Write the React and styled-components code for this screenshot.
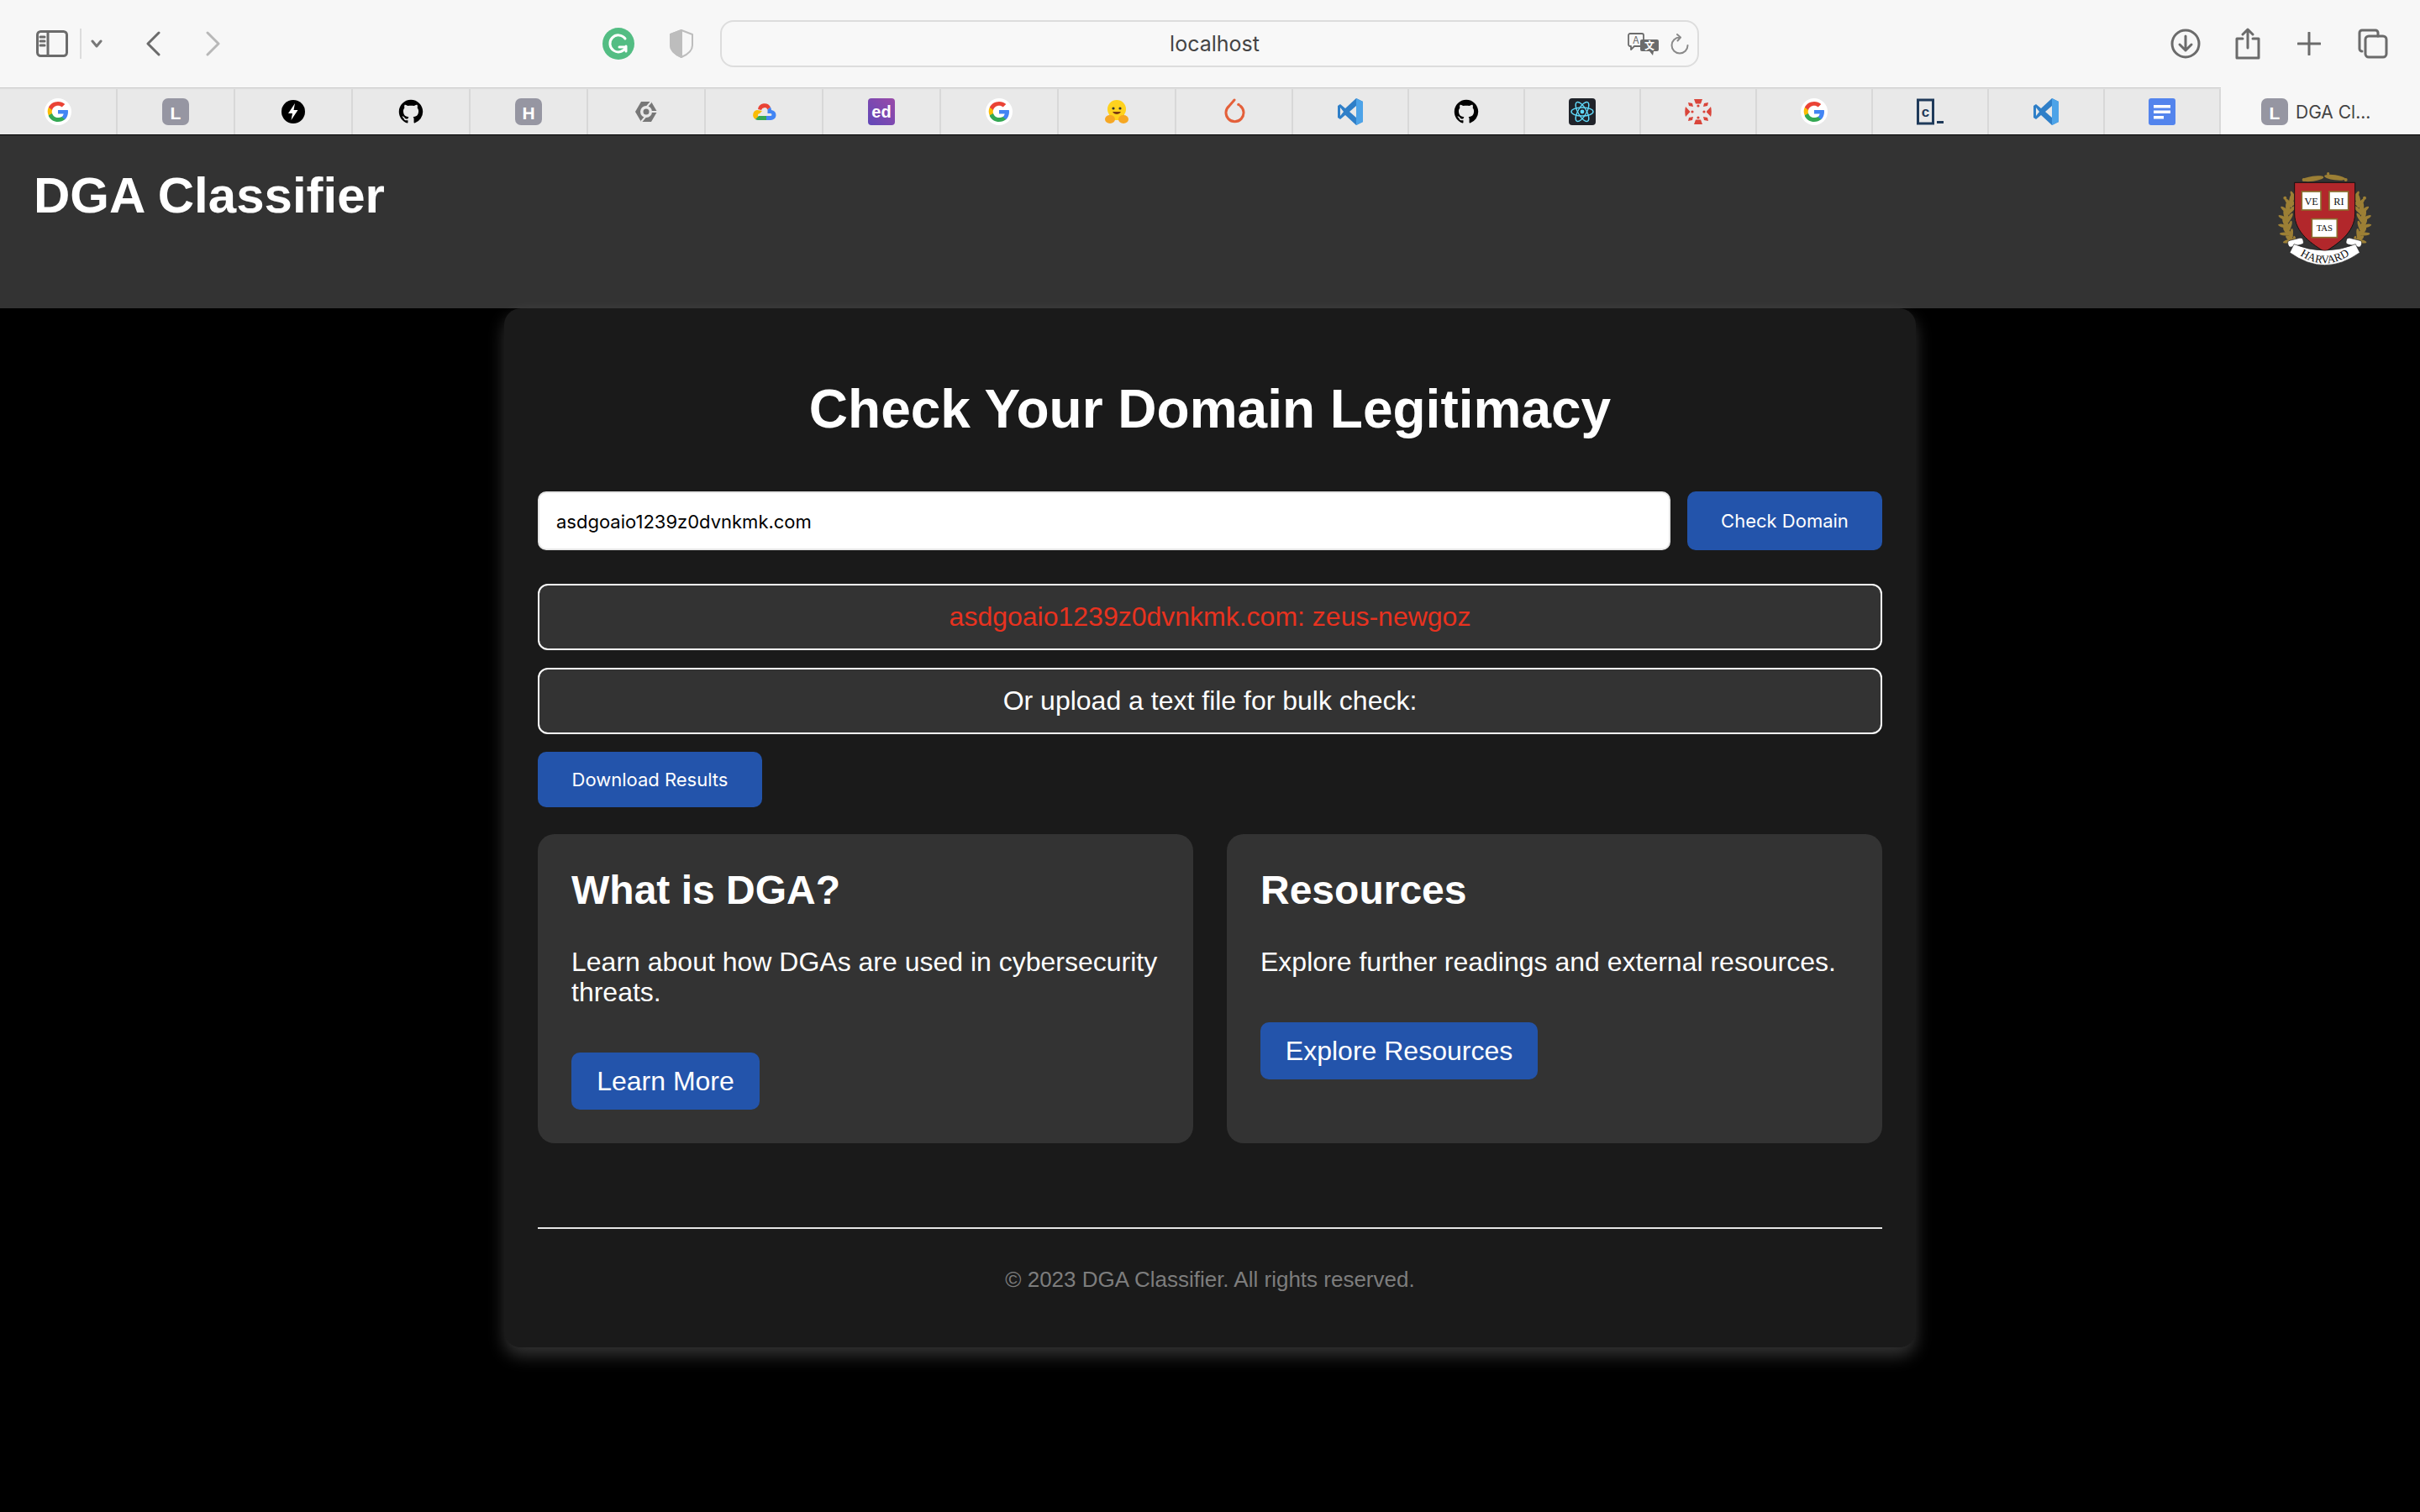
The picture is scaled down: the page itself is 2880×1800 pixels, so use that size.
import React from "react";
import styled, { createGlobalStyle } from "styled-components";

const GlobalStyle = createGlobalStyle`
  html, body { margin: 0; padding: 0; background: #000; }
  body { font-family: "Liberation Sans", Arial, sans-serif; }
  * { box-sizing: border-box; }
`;

const Page = styled.div`
  width: 2880px;
  height: 1800px;
  overflow: hidden;
  background: #000;
  display: flex;
  flex-direction: column;
`;

/* ---- browser chrome ---- */
const Toolbar = styled.div`
  height: 104px;
  background: #f7f7f7;
  display: flex;
  align-items: center;
  padding-left: 43px;
`;
const ToolIcon = styled.svg`
  display: block;
  flex: none;
  margin-left: ${(p) => p.$gap || 0}px;
  fill: none;
  stroke: ${(p) => p.$color || "#6b6b6b"};
  stroke-width: ${(p) => p.$weight || 3};
  stroke-linecap: round;
  stroke-linejoin: round;
`;
const UrlBar = styled.div`
  width: 1165px;
  height: 56px;
  margin-left: 32px;
  border: 2px solid #dddddd;
  border-radius: 16px;
  background: #f8f8f8;
  display: grid;
  grid-template-columns: 1fr auto 1fr;
  align-items: center;
  padding: 0 10px 0 22px;
`;
const UrlText = styled.span`
  grid-column: 2;
  font-family: Inter, "Liberation Sans", sans-serif;
  font-size: 25px;
  color: #444;
`;
const UrlTools = styled.div`
  grid-column: 3;
  justify-self: end;
  display: flex;
  align-items: center;
  gap: 14px;
`;

const TabStrip = styled.div`
  height: 56px;
  padding-top: 2px;
  background: #e9e9e9;
  display: flex;
  box-shadow: inset 0 3px 2px -2px #c4c4c4;
`;
const Tab = styled.div`
  width: ${(p) => p.$width}px;
  flex: none;
  display: flex;
  align-items: center;
  justify-content: center;
  border-right: 2px solid #d8d8d8;
`;
const ActiveTab = styled.div`
  flex: 1;
  margin-top: -2px;
  display: flex;
  align-items: center;
  padding: 2px 0 0 48px;
  gap: 9px;
  background: #f7f7f7;
  font-family: Inter, "Liberation Sans", sans-serif;
  font-size: 21px;
  color: #444;
`;
const Favicon = styled.svg`
  display: block;
  width: 32px;
  height: 32px;
`;
const FaviconText = styled.text`
  font-family: "Liberation Sans", Arial, sans-serif;
  font-weight: 700;
  font-size: ${(p) => p.$size || 20}px;
  fill: ${(p) => p.$fill || "#fff"};
  text-anchor: middle;
`;
const GlyphText = styled.text`
  font-family: "Noto Sans CJK SC", "Liberation Sans", sans-serif;
  font-size: ${(p) => p.$size}px;
  font-weight: ${(p) => p.$weight || 400};
  fill: ${(p) => p.$fill};
  stroke: none;
  text-anchor: middle;
`;

const GoogleIcon = () => (
  <Favicon viewBox="0 0 32 32">
    <circle cx="16" cy="16" r="16" fill="#fff" />
    <g transform="translate(16 16) scale(1.2) translate(-16 -16)">
      <path d="M26 16.300c0-.8-.1-1.400-.2-2H16v3.800h5.600c-.3 1.300-1 2.400-2.100 3.100v2.600h3.400c2-1.800 3.100-4.500 3.100-7.500z" fill="#4285f4" />
      <path d="M16 26c2.800 0 5.100-.9 6.900-2.500l-3.400-2.600c-.9.6-2.100 1-3.500 1-2.700 0-5-1.800-5.800-4.300H6.700v2.700C8.400 23.700 11.900 26 16 26z" fill="#34a853" />
      <path d="M10.200 17.600c-.4-1.100-.4-2.200 0-3.300v-2.700H6.700c-1.300 2.300-1.300 5.400 0 8z" fill="#fbbc05" />
      <path d="M16 10c1.500 0 2.900.5 3.900 1.500l3-3C21.100 6.900 18.700 6 16 6c-4.100 0-7.600 2.300-9.300 5.600l3.500 2.700C11 11.800 13.300 10 16 10z" fill="#ea4335" />
    </g>
  </Favicon>
);
const LetterIcon = ({ letter }) => (
  <Favicon viewBox="0 0 32 32">
    <rect width="32" height="32" rx="7" fill="#9696a2" />
    <FaviconText x="16" y="25" $size={21}>{letter}</FaviconText>
  </Favicon>
);
const BoltIcon = () => (
  <Favicon viewBox="0 0 32 32">
    <circle cx="16" cy="16" r="14" fill="#000" />
    <path d="M18 6l-8 12h5l-1.500 8 8-12h-5z" fill="#fff" />
  </Favicon>
);
const GithubIcon = () => (
  <Favicon viewBox="-1 -1 18 18">
    <path fill="#000" d="M8 0C3.580 0 0 3.580 0 8c0 3.540 2.290 6.530 5.470 7.590.4.070.55-.17.55-.38 0-.19-.01-.82-.01-1.490-2.010.37-2.530-.49-2.690-.94-.09-.23-.48-.94-.82-1.130-.28-.15-.68-.52-.01-.53.63-.01 1.080.58 1.230.82.720 1.210 1.870.87 2.330.66.070-.52.280-.87.510-1.070-1.780-.2-3.640-.89-3.640-3.950 0-.87.310-1.590.820-2.150-.080-.2-.360-1.020.080-2.120 0 0 .670-.210 2.200.820.640-.180 1.320-.270 2-.270s1.360.090 2 .270c1.530-1.040 2.200-.820 2.200-.820.440 1.100.160 1.920.080 2.120.510.560.820 1.270.820 2.150 0 3.070-1.870 3.750-3.650 3.950.290.250.540.730.540 1.480 0 1.070-.010 1.930-.010 2.200 0 .210.150.460.550.380A8.010 8.010 0 0 0 16 8c0-4.420-3.580-8-8-8z" />
  </Favicon>
);
const HexIcon = () => (
  <Favicon viewBox="0 0 32 32">
    <path d="M10 4h12l7 12-7 12H10L3 16z" fill="#777" />
    <circle cx="16" cy="16" r="7" fill="#e9e9e9" />
    <circle cx="16" cy="16" r="3.500" fill="#777" />
    <path d="M22 4l-6 7M29 16h-9M10 28l6-7" stroke="#e9e9e9" strokeWidth="2" />
  </Favicon>
);
const CloudIcon = () => (
  <Favicon viewBox="0 0 32 32">
    <path d="M9 13a8 8 0 0 1 15-2.500l-3.500 3A4 4 0 0 0 13 14z" fill="#ea4335" />
    <path d="M24 10.500A8 8 0 0 1 25 14a6 6 0 0 1-1 12h-5v-5h5a1.500 1.500 0 0 0 0-3h-3.500v-4.500z" fill="#4285f4" />
    <path d="M8 14a6 6 0 0 0-2 11l4-3a2 2 0 0 1 1-3.800L14 15z" fill="#fbbc05" />
    <path d="M6 25c1 .7 2.500 1 4 1h9v-5h-9z" fill="#34a853" />
  </Favicon>
);
const EdIcon = () => (
  <Favicon viewBox="0 0 32 32">
    <defs>
      <linearGradient id="edGrad" x1="1" y1="0" x2="0" y2="1">
        <stop offset="0" stopColor="#9a4aa8" />
        <stop offset="1" stopColor="#6048b8" />
      </linearGradient>
    </defs>
    <rect width="32" height="32" rx="4" fill="url(#edGrad)" />
    <FaviconText x="16" y="23" $size={20}>ed</FaviconText>
  </Favicon>
);
const HuggingIcon = () => (
  <Favicon viewBox="0 0 32 32">
    <circle cx="16" cy="13" r="11" fill="#ffd21e" />
    <rect x="7" y="10" width="18" height="16" fill="#ffd21e" />
    <ellipse cx="8" cy="25" rx="6" ry="5" fill="#f6a723" />
    <ellipse cx="24" cy="25" rx="6" ry="5" fill="#f6a723" />
    <circle cx="12" cy="12" r="1.600" fill="#333" />
    <circle cx="20" cy="12" r="1.600" fill="#333" />
    <path d="M11 16c2 4 8 4 10 0z" fill="#7a3b12" />
  </Favicon>
);
const TorchIcon = () => (
  <Favicon viewBox="0 0 32 32">
    <path d="M16 2l-6 7a10.500 10.500 0 1 0 13 0" fill="none" stroke="#e4603a" strokeWidth="3" strokeLinecap="round" />
    <circle cx="21" cy="7.500" r="1.800" fill="#e4603a" />
  </Favicon>
);
const VscodeIcon = () => (
  <Favicon viewBox="0 0 32 32">
    <path d="M23 0l8 4v24l-8 4-13-12-6 5-3-2v-14l3-2 6 5z" fill="#2f7fc8" />
    <path d="M23 0l8 4v24l-8 4z" fill="#4da3e8" />
    <path d="M23 9l-8 7 8 7z" fill="#e9e9e9" />
    <path d="M4 11l4 5-4 5z" fill="#e9e9e9" />
  </Favicon>
);
const ReactIcon = () => (
  <Favicon viewBox="0 0 32 32">
    <rect width="32" height="32" rx="4" fill="#20232a" />
    <g fill="none" stroke="#61dafb" strokeWidth="1.400">
      <ellipse cx="16" cy="16" rx="13" ry="5" />
      <ellipse cx="16" cy="16" rx="13" ry="5" transform="rotate(60 16 16)" />
      <ellipse cx="16" cy="16" rx="13" ry="5" transform="rotate(120 16 16)" />
    </g>
    <circle cx="16" cy="16" r="2.400" fill="#61dafb" />
  </Favicon>
);
const CanvasIcon = () => (
  <Favicon viewBox="0 0 32 32">
    <g fill="#d9453a">
      <path d="M11 1h10l-2 5.500h-6z" />
      <path d="M11 31h10l-2-5.500h-6z" />
      <path d="M1 10l5 5.500v1L1 22c-1-3.500-1-8.500 0-12z" />
      <path d="M31 10l-5 5.500v1l5 5.500c1-3.500 1-8.500 0-12z" />
      <path d="M4 5l5 1 1 4-5-1z" />
      <path d="M28 5l-5 1-1 4 5-1z" />
      <path d="M4 27l5-1 1-4-5 1z" />
      <path d="M28 27l-5-1-1-4 5 1z" />
      <circle cx="16" cy="9" r="1.600" />
      <circle cx="16" cy="23" r="1.600" />
      <circle cx="9" cy="16" r="1.600" />
      <circle cx="23" cy="16" r="1.600" />
    </g>
  </Favicon>
);
const CodeBoxIcon = () => (
  <Favicon viewBox="0 0 32 32">
    <rect x="1.500" y="2" width="18" height="28" fill="none" stroke="#1f3a5a" strokeWidth="3" />
    <FaviconText x="10.500" y="22" $size={17} $fill="#1f3a5a">c</FaviconText>
    <rect x="24" y="27" width="8" height="3" fill="#1f3a5a" />
  </Favicon>
);
const DocsIcon = () => (
  <Favicon viewBox="0 0 32 32">
    <rect width="32" height="32" rx="3" fill="#5384ed" />
    <rect x="6" y="8" width="20" height="3.500" fill="#fff" />
    <rect x="6" y="14.500" width="20" height="3.500" fill="#fff" />
    <rect x="6" y="21" width="12" height="3.500" fill="#fff" />
  </Favicon>
);

const tabs = [
  [<GoogleIcon />, 140], [<LetterIcon letter="L" />, 140], [<BoltIcon />, 140], [<GithubIcon />, 140],
  [<LetterIcon letter="H" />, 140], [<HexIcon />, 140], [<CloudIcon />, 140], [<EdIcon />, 140],
  [<GoogleIcon />, 140], [<HuggingIcon />, 140], [<TorchIcon />, 139], [<VscodeIcon />, 138],
  [<GithubIcon />, 138], [<ReactIcon />, 138], [<CanvasIcon />, 138], [<GoogleIcon />, 138],
  [<CodeBoxIcon />, 138], [<VscodeIcon />, 138], [<DocsIcon />, 138],
];

/* ---- page header ---- */
const Header = styled.header`
  height: 207px;
  flex: none;
  background: #333333;
  border-top: 1px solid #000;
  padding: 40px 52px 0 40px;
  display: flex;
  justify-content: space-between;
  align-items: flex-start;
`;
const Brand = styled.h1`
  margin: 0;
  font-size: 60px;
  line-height: 64px;
  font-weight: 700;
  color: #fff;
`;
const Crest = styled.svg`
  display: block;
  width: 118px;
  height: 112px;
  margin-top: 3px;
`;
const CrestText = styled.text`
  font-family: "Liberation Serif", "Times New Roman", serif;
  font-size: ${(p) => p.$size}px;
  fill: #111;
  text-anchor: middle;
`;

// leaves of the wreath, one branch per side, in the crest's own coordinates
const wreathNodes = [-42, -30, -18, -6, 6, 18, 30];

const HarvardCrest = () => (
  <Crest viewBox="90 40 354 336">
    <g fill="#9c7f35">
      {wreathNodes.map((deg) => {
        const a = (deg * Math.PI) / 180;
        const x = 138 * Math.cos(a);
        const y = 215 + 138 * Math.sin(a);
        return (
          <g key={deg}>
            {[-1, 1].map((side) => {
              const cx = 260 + side * x;
              return (
                <g key={side}>
                  <ellipse cx={cx} cy={y} rx="8" ry="24" transform={`rotate(${side * (deg + 25)} ${cx} ${y})`} />
                  <ellipse cx={cx + side * 10} cy={y + 6} rx="6" ry="20" transform={`rotate(${side * (deg + 70)} ${cx + side * 10} ${y + 6})`} />
                  <ellipse cx={cx - side * 12} cy={y + 6} rx="6" ry="20" transform={`rotate(${side * (deg - 25)} ${cx - side * 12} ${y + 6})`} />
                </g>
              );
            })}
          </g>
        );
      })}
      <ellipse cx="218" cy="66" rx="38" ry="9" transform="rotate(-8 218 66)" />
      <ellipse cx="296" cy="62" rx="38" ry="9" transform="rotate(8 296 62)" />
      <circle cx="185" cy="70" r="6" />
      <circle cx="335" cy="70" r="6" />
      <circle cx="272" cy="48" r="5" />
      <circle cx="118" cy="135" r="6" />
      <circle cx="402" cy="135" r="6" />
    </g>
    <path d="M152 80H368V190C368 262 300 302 260 328 220 302 152 262 152 190Z" fill="#b2272b" stroke="#111" strokeWidth="3" />
    <g stroke="#8a6d2d" strokeWidth="5" fill="#fff">
      <rect x="178" y="112" width="68" height="66" />
      <rect x="276" y="112" width="68" height="66" />
      <rect x="214" y="210" width="90" height="66" />
    </g>
    <CrestText x="212" y="159" $size={37}>VE</CrestText>
    <CrestText x="310" y="159" $size={37}>RI</CrestText>
    <CrestText x="259" y="254" $size={32}>TAS</CrestText>
    <g fill="#fff" stroke="#222" strokeWidth="2">
      <rect x="128" y="282" width="56" height="24" rx="10" transform="rotate(-14 156 294)" />
      <rect x="336" y="282" width="56" height="24" rx="10" transform="rotate(14 364 294)" />
      <path d="M150 300Q260 345 370 300L385 330Q260 420 135 330Z" />
    </g>
    <path id="crestArc" d="M160 332Q260 404 360 332" fill="none" />
    <CrestText $size={40}>
      <textPath href="#crestArc" startOffset="50%">HARVARD</textPath>
    </CrestText>
  </Crest>
);

/* ---- main card ---- */
const Main = styled.main`
  width: 1680px;
  margin: 0 auto;
  background: #1a1a1a;
  border-radius: 20px;
  padding: 40px 40px 0;
  height: 1237px;
  box-shadow: 0 10px 20px rgba(255, 255, 255, 0.2);
  display: flex;
  flex-direction: column;
`;
const Title = styled.h2`
  margin: 41px 0 0;
  height: 79px;
  font-size: 64px;
  line-height: 79px;
  font-weight: 700;
  text-align: center;
  color: #fff;
`;
const SearchRow = styled.div`
  display: flex;
  gap: 20px;
  margin-top: 58px;
`;
const DomainInput = styled.input`
  flex: 1;
  height: 70px;
  padding: 2px 20px 0;
  border: 2px solid #e6e6e6;
  border-radius: 10px;
  background: #fff;
  font-family: Inter, "Liberation Sans", sans-serif;
  font-size: 22px;
  color: #000;
  outline: none;
`;
const Button = styled.button`
  height: ${(p) => p.$height}px;
  width: ${(p) => p.$width}px;
  padding: 0;
  border: none;
  border-radius: 10px;
  background: #2354ab;
  color: #fff;
  font-family: ${(p) => p.$font || '"Liberation Sans", Arial, sans-serif'};
  font-size: ${(p) => p.$size}px;
  text-align: center;
`;
const Notice = styled.div`
  height: 79px;
  margin-top: ${(p) => p.$top}px;
  border: 2px solid #fff;
  border-radius: 12px;
  background: #333333;
  display: flex;
  align-items: center;
  justify-content: center;
  font-size: 32px;
  color: ${(p) => p.$color};
`;
const DownloadRow = styled.div`
  margin-top: 21px;
`;
const Cards = styled.div`
  display: grid;
  grid-template-columns: 1fr 1fr;
  gap: 40px;
  margin-top: 32px;
`;
const InfoCard = styled.section`
  height: 368px;
  padding: 40px;
  border-radius: 20px;
  background: #333333;
`;
const CardTitle = styled.h3`
  margin: 0;
  font-size: 48px;
  line-height: 54px;
  font-weight: 700;
  color: #fff;
`;
const CardText = styled.p`
  margin: 40px 0 0;
  font-size: 32px;
  line-height: 36px;
  color: #fff;
`;
const CardButton = styled(Button)`
  display: block;
  margin-top: 54px;
`;
const Footer = styled.footer`
  margin-top: 100px;
  border-top: 2px solid #e6e6e6;
  padding-top: 44px;
  text-align: center;
  font-size: 26px;
  line-height: 32px;
  color: #7d7d7d;
`;

const uiFont = 'Inter, "Liberation Sans", sans-serif';

export default function App() {
  return (
    <Page>
      <GlobalStyle />
      <Toolbar>
        <ToolIcon width="38" height="32" viewBox="0 0 38 32">
          <rect x="1.500" y="1.500" width="35" height="29" rx="4" />
          <path d="M14 2v28M5 8h5M5 13h5M5 18h5" />
        </ToolIcon>
        <ToolIcon width="2" height="36" viewBox="0 0 2 36" $color="#dcdcdc" $weight={2} $gap={14}>
          <path d="M1 0v36" />
        </ToolIcon>
        <ToolIcon width="14" height="10" viewBox="0 0 14 10" $color="#777" $gap={11}>
          <path d="M2 2l5 6 5-6" />
        </ToolIcon>
        <ToolIcon width="18" height="30" viewBox="0 0 18 30" $gap={51}>
          <path d="M16 2L3 15l13 13" />
        </ToolIcon>
        <ToolIcon width="18" height="30" viewBox="0 0 18 30" $color="#b8b8b8" $gap={54}>
          <path d="M2 2l13 13L2 28" />
        </ToolIcon>
        <ToolIcon width="38" height="38" viewBox="0 0 38 38" $gap={454} $color="#fff" $weight={3}>
          <circle cx="19" cy="19" r="19" fill="#53bd83" stroke="none" />
          <path d="M27 13a10 10 0 1 0 1 10h-8M28 28v-6" />
        </ToolIcon>
        <ToolIcon width="28" height="34" viewBox="0 0 28 34" $gap={42} $color="#bdbdbd" $weight={2}>
          <path d="M14 1L27 6v13c0 6-6 11-13 14C7 30 1 25 1 19V6z" />
          <path d="M14 1v32C7 30 1 25 1 19V6z" fill="#bdbdbd" />
        </ToolIcon>
        <UrlBar>
          <UrlText>localhost</UrlText>
          <UrlTools>
            <ToolIcon width="37" height="27" viewBox="0 0 37 27" $weight={1.800}>
              <path d="M3 1h14a2 2 0 0 1 2 2v11a2 2 0 0 1-2 2H8l-4 4v-4H3a2 2 0 0 1-2-2V3a2 2 0 0 1 2-2z" />
              <GlyphText x="10" y="13" $size={12} $fill="#6b6b6b">A</GlyphText>
              <path d="M17 8h18a2 2 0 0 1 2 2v10a2 2 0 0 1-2 2h-4l-1 5-4-5h-9a2 2 0 0 1-2-2V10a2 2 0 0 1 2-2z" fill="#6b6b6b" stroke="none" />
              <GlyphText x="26" y="20" $size={12} $fill="#fff" $weight={700}>文</GlyphText>
            </ToolIcon>
            <ToolIcon width="22" height="25" viewBox="0 0 22 25" $color="#8a8a8a" $weight={2}>
              <path d="M11 4.500a9.500 9.500 0 1 0 9.500 9.500M8 1l4 3.500L8.500 8.500" />
            </ToolIcon>
          </UrlTools>
        </UrlBar>
        <ToolIcon width="36" height="36" viewBox="0 0 36 36" $gap={561}>
          <circle cx="18" cy="18" r="16" />
          <path d="M18 9v17M11 19l7 7 7-7" />
        </ToolIcon>
        <ToolIcon width="30" height="38" viewBox="0 0 30 38" $gap={41}>
          <path d="M9 13H2v23h26V13h-7M15 24V2M9 8l6-6 6 6" />
        </ToolIcon>
        <ToolIcon width="28" height="28" viewBox="0 0 28 28" $gap={44}>
          <path d="M14 1v26M1 14h26" />
        </ToolIcon>
        <ToolIcon width="36" height="36" viewBox="0 0 36 36" $gap={44}>
          <rect x="9" y="9" width="25" height="25" rx="4" />
          <path d="M5 27h-0a3 3 0 0 1-3-3V5a3 3 0 0 1 3-3h16a3 3 0 0 1 3 3v4" />
        </ToolIcon>
      </Toolbar>
      <TabStrip>
        {tabs.map(([icon, width], i) => (
          <Tab key={i} $width={width}>{icon}</Tab>
        ))}
        <ActiveTab>
          <LetterIcon letter="L" />
          DGA Cl...
        </ActiveTab>
      </TabStrip>
      <Header>
        <Brand>DGA Classifier</Brand>
        <HarvardCrest />
      </Header>
      <Main>
        <Title>Check Your Domain Legitimacy</Title>
        <SearchRow>
          <DomainInput defaultValue="asdgoaio1239z0dvnkmk.com" />
          <Button $width={232} $height={70} $size={22} $font={uiFont}>Check Domain</Button>
        </SearchRow>
        <Notice $top={40} $color="#e8321f">asdgoaio1239z0dvnkmk.com: zeus-newgoz</Notice>
        <Notice $top={21} $color="#fff">Or upload a text file for bulk check:</Notice>
        <DownloadRow>
          <Button $width={267} $height={66} $size={22} $font={uiFont}>Download Results</Button>
        </DownloadRow>
        <Cards>
          <InfoCard>
            <CardTitle>What is DGA?</CardTitle>
            <CardText>Learn about how DGAs are used in cybersecurity threats.</CardText>
            <CardButton $width={224} $height={68} $size={32}>Learn More</CardButton>
          </InfoCard>
          <InfoCard>
            <CardTitle>Resources</CardTitle>
            <CardText>Explore further readings and external resources.</CardText>
            <CardButton $width={330} $height={68} $size={32}>Explore Resources</CardButton>
          </InfoCard>
        </Cards>
        <Footer>© 2023 DGA Classifier. All rights reserved.</Footer>
      </Main>
    </Page>
  );
}
